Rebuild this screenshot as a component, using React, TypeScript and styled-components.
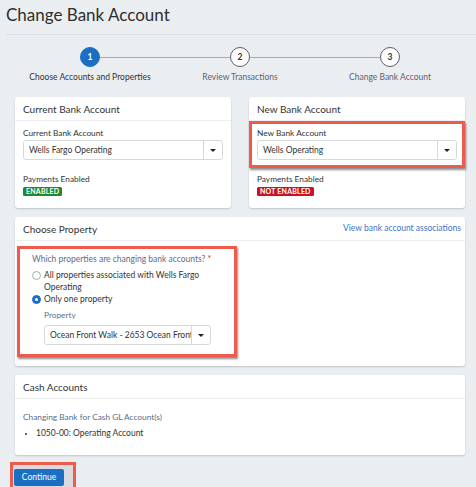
import React from 'react'
import styled, { createGlobalStyle } from 'styled-components'

const GlobalStyle = createGlobalStyle`
  html, body {
    margin: 0;
    padding: 0;
    background: #ebeef1;
    font-family: Lato, "Open Sans", "Liberation Sans", sans-serif;
    color: #333333;
  }
  * { box-sizing: border-box; }
`

const Page = styled.div`
  width: 476px;
  height: 487px;
  overflow: hidden;
`

const Header = styled.header`
  margin-left: 6px;
  height: 35px;
  padding-top: 3px;
  border-bottom: 1px solid #dde1e5;
`

const Title = styled.h1`
  margin: 0;
  font-size: 17px;
  line-height: 24px;
  font-weight: 400;
  color: #2e2e2e;
`

const Content = styled.div`
  padding: 0 11px 0 15px;
`

const Stepper = styled.ol`
  list-style: none;
  margin: 12px 0 14px;
  padding: 0;
  display: grid;
  grid-template-columns: repeat(3, 1fr);
`

const Step = styled.li`
  display: flex;
  flex-direction: column;
  align-items: center;
  gap: 4px;
`

const StepTrack = styled.div`
  display: flex;
  align-items: center;
  width: 100%;
`

const Connector = styled.span<{ $hidden?: boolean }>`
  flex: 1;
  height: 1px;
  background: ${(p) => (p.$hidden ? 'transparent' : '#a6abb0')};
`

const Circle = styled.span<{ $active?: boolean }>`
  width: 20px;
  height: 20px;
  border-radius: 50%;
  display: flex;
  align-items: center;
  justify-content: center;
  font-size: 8.5px;
  font-weight: 700;
  background: ${(p) => (p.$active ? '#1b6ec2' : '#ffffff')};
  color: ${(p) => (p.$active ? '#ffffff' : '#333333')};
  border: 1.5px solid ${(p) => (p.$active ? '#1b6ec2' : '#5c5f63')};
`

const StepLabel = styled.span<{ $active?: boolean }>`
  font-size: 8.5px;
  line-height: 12px;
  color: ${(p) => (p.$active ? '#333333' : '#5a6472')};
`

const Row = styled.div`
  display: grid;
  grid-template-columns: 1fr 1fr;
  gap: 18px;
`

const Card = styled.section`
  background: #ffffff;
  border-radius: 3px;
  box-shadow: 0 1px 2px rgba(0, 0, 0, 0.18);
  margin-bottom: 9px;
`

const CardHeader = styled.div`
  height: 24px;
  display: flex;
  align-items: center;
  justify-content: space-between;
  padding: 0 4px 0 8px;
  border-bottom: 1px solid #eceef0;
`

const CardTitle = styled.h2`
  margin: 0;
  font-size: 10px;
  font-weight: 400;
  color: #333333;
`

const HeaderLink = styled.a`
  font-size: 8.5px;
  color: #3b74c6;
  text-decoration: none;
  margin-top: -2px;
`

const Highlight = styled.div<{ $on?: boolean }>`
  border: 3px solid ${(p) => (p.$on ? '#ee5a4b' : 'transparent')};
  box-shadow: ${(p) => (p.$on ? '1px 2px 2px rgba(0, 0, 0, 0.45)' : 'none')};
`

const FieldGroup = styled(Highlight)`
  padding: 3px 5px 5px;
`

const Label = styled.div<{ $muted?: boolean; $gap?: number }>`
  font-size: 8.3px;
  line-height: 12px;
  margin-bottom: ${(p) => p.$gap ?? 1}px;
  color: ${(p) => (p.$muted ? '#5b6e8a' : '#333333')};
`

const Select = styled.div<{ $width?: number }>`
  display: flex;
  height: 20px;
  width: ${(p) => (p.$width ? `${p.$width}px` : '100%')};
  border: 1px solid #d6d9dc;
  border-radius: 3px;
  background: #ffffff;
`

const SelectValue = styled.span`
  flex: 1;
  min-width: 0;
  padding: 0 5px;
  font-size: 8.5px;
  line-height: 18px;
  white-space: nowrap;
  overflow: hidden;
  color: #333333;
`

const Caret = styled.span`
  width: 19px;
  border-left: 1px solid #d6d9dc;
  display: flex;
  align-items: center;
  justify-content: center;
  &::after {
    content: '';
    border-left: 3px solid transparent;
    border-right: 3px solid transparent;
    border-top: 3px solid #222222;
  }
`

const Payments = styled.div`
  display: flex;
  flex-direction: column;
  align-items: flex-start;
  gap: 2px;
  padding: 5px 8px 12px;
`

const Badge = styled.span<{ $tone: 'ok' | 'off' }>`
  display: block;
  padding: 0 3px;
  height: 9px;
  line-height: 9px;
  font-size: 7px;
  font-weight: 700;
  letter-spacing: 0.2px;
  border-radius: 1.5px;
  color: #ffffff;
  background: ${(p) => (p.$tone === 'ok' ? '#1f8a2e' : '#cc1122')};
`

const PropertyBody = styled.div`
  padding: 5px 2px 9px;
`

const PropertyBox = styled(Highlight)`
  width: 220px;
  padding: 4px 12px 9px;
`

const Question = styled.div`
  font-size: 8.5px;
  line-height: 12px;
  color: #5b6e8a;
  margin-bottom: 4px;
  span {
    color: #d0202a;
  }
`

const RadioRow = styled.label`
  display: flex;
  align-items: flex-start;
  gap: 3px;
  font-size: 8.5px;
  line-height: 12px;
  color: #333333;
`

const Radio = styled.span<{ $checked?: boolean }>`
  flex: none;
  width: 9px;
  height: 9px;
  margin-top: 1.5px;
  border-radius: 50%;
  display: flex;
  align-items: center;
  justify-content: center;
  border: 1px solid ${(p) => (p.$checked ? '#1b6ec2' : '#a9adb2')};
  background: ${(p) => (p.$checked ? '#1b6ec2' : '#ffffff')};
  &::after {
    content: '';
    width: 3px;
    height: 3px;
    border-radius: 50%;
    background: ${(p) => (p.$checked ? '#ffffff' : 'transparent')};
  }
`

const SubField = styled.div`
  padding-left: 12px;
  margin-top: 4px;
`

const CashBody = styled.div`
  padding: 12px 8px 16px;
`

const Bullets = styled.ul`
  margin: 4px 0 0;
  padding: 0 0 0 13px;
  font-size: 8.5px;
  line-height: 12px;
  li::marker {
    font-size: 7px;
  }
`

const Footer = styled.div`
  margin: -9px 0 0 -5px;
  display: inline-flex;
  border: 3px solid #ee5a4b;
  padding: 4px 9px 1px 1px;
  background: #d9dbdd;
`

const Button = styled.button`
  height: 17px;
  width: 50px;
  border: none;
  border-radius: 2px;
  background: #1b6ec2;
  color: #ffffff;
  font-family: inherit;
  font-size: 8.5px;
  padding: 0;
`

const steps = ['Choose Accounts and Properties', 'Review Transactions', 'Change Bank Account']

export default function App() {
  return (
    <Page>
      <GlobalStyle />
      <Header>
        <Title>Change Bank Account</Title>
      </Header>
      <Content>
        <Stepper>
          {steps.map((s, i) => (
            <Step key={s}>
              <StepTrack>
                <Connector $hidden={i === 0} />
                <Circle $active={i === 0}>{i + 1}</Circle>
                <Connector $hidden={i === steps.length - 1} />
              </StepTrack>
              <StepLabel $active={i === 0}>{s}</StepLabel>
            </Step>
          ))}
        </Stepper>

        <Row>
          <Card>
            <CardHeader>
              <CardTitle>Current Bank Account</CardTitle>
            </CardHeader>
            <FieldGroup>
              <Label>Current Bank Account</Label>
              <Select>
                <SelectValue>Wells Fargo Operating</SelectValue>
                <Caret />
              </Select>
            </FieldGroup>
            <Payments>
              <Label $gap={0}>Payments Enabled</Label>
              <Badge $tone="ok">ENABLED</Badge>
            </Payments>
          </Card>
          <Card>
            <CardHeader>
              <CardTitle>New Bank Account</CardTitle>
            </CardHeader>
            <FieldGroup $on>
              <Label>New Bank Account</Label>
              <Select>
                <SelectValue>Wells Operating</SelectValue>
                <Caret />
              </Select>
            </FieldGroup>
            <Payments>
              <Label $gap={0}>Payments Enabled</Label>
              <Badge $tone="off">NOT ENABLED</Badge>
            </Payments>
          </Card>
        </Row>

        <Card>
          <CardHeader>
            <CardTitle>Choose Property</CardTitle>
            <HeaderLink href="#">View bank account associations</HeaderLink>
          </CardHeader>
          <PropertyBody>
            <PropertyBox $on>
              <Question>
                Which properties are changing bank accounts? <span>*</span>
              </Question>
              <RadioRow>
                <Radio />
                All properties associated with Wells Fargo Operating
              </RadioRow>
              <RadioRow>
                <Radio $checked />
                Only one property
              </RadioRow>
              <SubField>
                <Label $muted $gap={4}>Property</Label>
                <Select $width={167}>
                  <SelectValue>Ocean Front Walk - 2653 Ocean Front Walk</SelectValue>
                  <Caret />
                </Select>
              </SubField>
            </PropertyBox>
          </PropertyBody>
        </Card>

        <Card>
          <CardHeader>
            <CardTitle>Cash Accounts</CardTitle>
          </CardHeader>
          <CashBody>
            <Label $muted>Changing Bank for Cash GL Account(s)</Label>
            <Bullets>
              <li>1050-00: Operating Account</li>
            </Bullets>
          </CashBody>
        </Card>

        <Footer>
          <Button>Continue</Button>
        </Footer>
      </Content>
    </Page>
  )
}
